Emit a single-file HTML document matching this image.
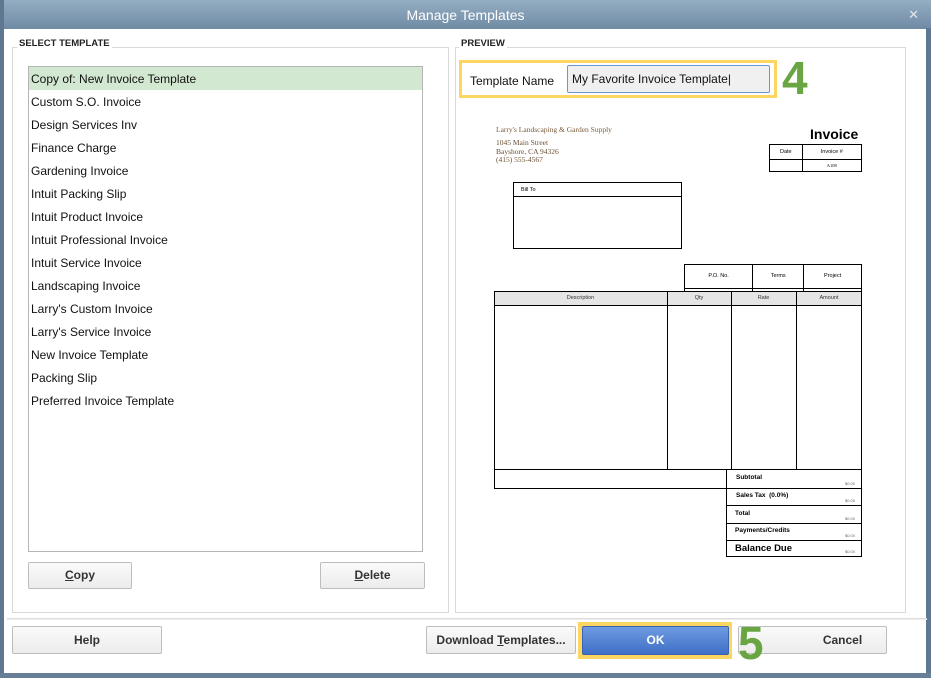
<!DOCTYPE html>
<html><head><style>
*{margin:0;padding:0;box-sizing:border-box}
body{width:931px;height:678px;position:relative;background:#fff;font-family:"Liberation Sans",sans-serif;overflow:hidden}
.abs{position:absolute}
.title{left:0;top:0;width:931px;height:29px;background:linear-gradient(#94adc2,#6f8ba4);color:#fff;font-size:14px;text-align:center;line-height:30px}
.lb{left:0;top:0;width:4px;height:678px;background:#5f7890}
.rb{right:0;top:28px;width:5px;height:650px;background:#5f7890}
.bb{left:0;top:673px;width:931px;height:5px;background:#667f96}
.grp{border:1px solid #d9d9d9}
.lab{font-size:9.5px;font-weight:bold;color:#222;background:#fff;padding:0 2px}
.list{left:28px;top:66px;width:395px;height:486px;border:1px solid #b5b5b5}
.row{height:23px;line-height:24px;font-size:12px;color:#111;padding-left:2px}
.btn{border:1px solid #bdbdbd;border-radius:2px;background:linear-gradient(#fafafa,#ececec);font-size:12px;font-weight:bold;color:#333;text-align:center;line-height:25px}
.inv{font-family:"Liberation Sans",sans-serif;font-size:6px;color:#333}
table{border-collapse:collapse}
td{border:1px solid #000;text-align:center;font-size:5.5px}
.d{position:absolute;right:6px;bottom:2px;font-size:4px;color:#666;font-weight:normal}
</style></head><body>
<div class="abs title">Manage Templates<span style="position:absolute;right:12px;top:0;font-size:13px;color:#dfe6ec">✕</span></div>
<div class="abs lb"></div><div class="abs rb"></div><div class="abs bb"></div>

<div class="abs grp" style="left:12px;top:47px;width:437px;height:566px"></div>
<div class="abs lab" style="left:17px;top:38px">SELECT TEMPLATE</div>
<div class="abs list">
<div class="row" style="background:#d3e8d0">Copy of: New Invoice Template</div>
<div class="row">Custom S.O. Invoice</div>
<div class="row">Design Services Inv</div>
<div class="row">Finance Charge</div>
<div class="row">Gardening Invoice</div>
<div class="row">Intuit Packing Slip</div>
<div class="row">Intuit Product Invoice</div>
<div class="row">Intuit Professional Invoice</div>
<div class="row">Intuit Service Invoice</div>
<div class="row">Landscaping Invoice</div>
<div class="row">Larry's Custom Invoice</div>
<div class="row">Larry's Service Invoice</div>
<div class="row">New Invoice Template</div>
<div class="row">Packing Slip</div>
<div class="row">Preferred Invoice Template</div>
</div>
<div class="abs btn" style="left:28px;top:562px;width:104px;height:27px"><u>C</u>opy</div>
<div class="abs btn" style="left:320px;top:562px;width:105px;height:27px"><u>D</u>elete</div>

<div class="abs grp" style="left:455px;top:47px;width:451px;height:566px"></div>
<div class="abs lab" style="left:459px;top:38px">PREVIEW</div>
<div class="abs" style="left:459px;top:60px;width:318px;height:38px;border:3px solid #fcd661"></div>
<div class="abs" style="left:470px;top:74px;font-size:12px;color:#111">Template Name</div>
<div class="abs" style="left:567px;top:65px;width:203px;height:28px;border:1px solid #6a95d6;border-radius:2px;background:#f0f0f0;font-size:12px;line-height:26px;padding-left:4px;color:#111">My Favorite Invoice Template|</div>
<div class="abs" style="left:782px;top:52px;font-size:46px;font-weight:bold;color:#6aa543;line-height:52px">4</div>

<div class="abs" style="left:496px;top:125px;font-family:'Liberation Serif',serif;font-size:7.5px;color:#7b5a3a">Larry's Landscaping &amp; Garden Supply</div>
<div class="abs" style="left:496px;top:139px;font-family:'Liberation Serif',serif;font-size:7.5px;line-height:8.5px;color:#6b5030">1045 Main Street<br>Bayshore, CA 94326<br>(415) 555-4567</div>
<div class="abs" style="left:810px;top:126px;font-size:14px;font-weight:bold;color:#000">Invoice</div>
<table class="abs" style="left:769px;top:144px;width:93px;height:28px"><tr><td>Date</td><td>Invoice #</td></tr><tr><td></td><td style="font-family:'Liberation Serif';font-size:4.5px">A108</td></tr></table>
<div class="abs" style="left:513px;top:182px;width:169px;height:67px;border:1px solid #000"><div style="height:14px;border-bottom:1px solid #000;font-size:5.5px;padding:4px 0 0 7px">Bill To</div></div>
<table class="abs" style="left:684px;top:264px;width:178px;height:28px"><tr><td>P.O. No.</td><td>Terms</td><td>Project</td></tr><tr><td></td><td></td><td></td></tr></table>
<div class="abs" style="left:494px;top:291px;width:368px;height:198px;border:1px solid #000"></div>
<div class="abs" style="left:494px;top:291px;width:368px;height:15px;background:#e5e5e5;border:1px solid #000"></div>
<div class="abs inv" style="left:494px;top:295px;width:173px;text-align:center;font-size:5.5px">Description</div>
<div class="abs inv" style="left:667px;top:295px;width:64px;text-align:center;font-size:5.5px">Qty</div>
<div class="abs inv" style="left:731px;top:295px;width:65px;text-align:center;font-size:5.5px">Rate</div>
<div class="abs inv" style="left:796px;top:295px;width:66px;text-align:center;font-size:5.5px">Amount</div>
<div class="abs" style="left:667px;top:291px;width:1px;height:179px;background:#000"></div>
<div class="abs" style="left:731px;top:291px;width:1px;height:179px;background:#000"></div>
<div class="abs" style="left:796px;top:291px;width:1px;height:179px;background:#000"></div>
<div class="abs" style="left:494px;top:469px;width:368px;height:1px;background:#000"></div>
<div class="abs" style="left:726px;top:469px;width:136px;height:88px;border:1px solid #000;background:#fff;font-size:6.5px;font-weight:bold">
<div style="position:relative;height:19px;border-bottom:1px solid #000;padding:4px 0 0 9px">Subtotal<span class="d">$0.00</span></div>
<div style="position:relative;height:17px;border-bottom:1px solid #000;padding:3px 0 0 9px">Sales Tax &nbsp;(0.0%)<span class="d">$0.00</span></div>
<div style="position:relative;height:18px;border-bottom:1px solid #000;padding:4px 0 0 8px">Total<span class="d">$0.00</span></div>
<div style="position:relative;height:17px;border-bottom:1px solid #000;padding:3px 0 0 8px">Payments/Credits<span class="d">$0.00</span></div>
<div style="position:relative;height:15px;padding:2px 0 0 8px;font-size:9.5px">Balance Due<span class="d">$0.00</span></div>
</div>

<div class="abs" style="left:7px;top:618px;width:920px;height:2px;border-top:1px solid #dcdcdc;border-bottom:1px solid #eee"></div>
<div class="abs btn" style="left:12px;top:626px;width:150px;height:28px;line-height:26px">Help</div>
<div class="abs btn" style="left:426px;top:626px;width:150px;height:28px;line-height:26px">Download <u>T</u>emplates...</div>
<div class="abs" style="left:578px;top:622px;width:154px;height:37px;background:#fcd661"></div>
<div class="abs btn" style="left:582px;top:626px;width:147px;height:29px;line-height:27px;background:linear-gradient(#6e9be0,#3f6fc8);color:#fff;border-color:#3a62b0">OK</div>
<div class="abs btn" style="left:738px;top:626px;width:149px;height:28px;line-height:26px;padding-left:60px">Cancel</div>
<div class="abs" style="left:738px;top:618px;font-size:46px;font-weight:bold;color:#6aa543;line-height:50px">5</div>
</body></html>
